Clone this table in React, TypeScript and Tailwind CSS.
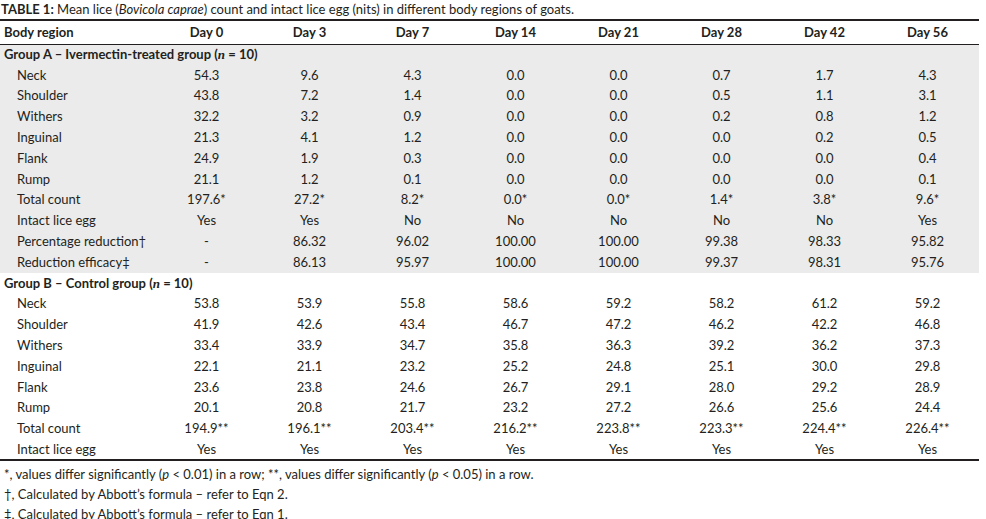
import React from "react";

type Row = { label: string; values: string[] };

const groupA: Row[] = [
  { label: "Neck", values: ["54.3", "9.6", "4.3", "0.0", "0.0", "0.7", "1.7", "4.3"] },
  { label: "Shoulder", values: ["43.8", "7.2", "1.4", "0.0", "0.0", "0.5", "1.1", "3.1"] },
  { label: "Withers", values: ["32.2", "3.2", "0.9", "0.0", "0.0", "0.2", "0.8", "1.2"] },
  { label: "Inguinal", values: ["21.3", "4.1", "1.2", "0.0", "0.0", "0.0", "0.2", "0.5"] },
  { label: "Flank", values: ["24.9", "1.9", "0.3", "0.0", "0.0", "0.0", "0.0", "0.4"] },
  { label: "Rump", values: ["21.1", "1.2", "0.1", "0.0", "0.0", "0.0", "0.0", "0.1"] },
  { label: "Total count", values: ["197.6*", "27.2*", "8.2*", "0.0*", "0.0*", "1.4*", "3.8*", "9.6*"] },
  { label: "Intact lice egg", values: ["Yes", "Yes", "No", "No", "No", "No", "No", "Yes"] },
  { label: "Percentage reduction\u2020", values: ["-", "86.32", "96.02", "100.00", "100.00", "99.38", "98.33", "95.82"] },
  { label: "Reduction efficacy\u2021", values: ["-", "86.13", "95.97", "100.00", "100.00", "99.37", "98.31", "95.76"] },
];

const groupB: Row[] = [
  { label: "Neck", values: ["53.8", "53.9", "55.8", "58.6", "59.2", "58.2", "61.2", "59.2"] },
  { label: "Shoulder", values: ["41.9", "42.6", "43.4", "46.7", "47.2", "46.2", "42.2", "46.8"] },
  { label: "Withers", values: ["33.4", "33.9", "34.7", "35.8", "36.3", "39.2", "36.2", "37.3"] },
  { label: "Inguinal", values: ["22.1", "21.1", "23.2", "25.2", "24.8", "25.1", "30.0", "29.8"] },
  { label: "Flank", values: ["23.6", "23.8", "24.6", "26.7", "29.1", "28.0", "29.2", "28.9"] },
  { label: "Rump", values: ["20.1", "20.8", "21.7", "23.2", "27.2", "26.6", "25.6", "24.4"] },
  { label: "Total count", values: ["194.9**", "196.1**", "203.4**", "216.2**", "223.8**", "223.3**", "224.4**", "226.4**"] },
  { label: "Intact lice egg", values: ["Yes", "Yes", "Yes", "Yes", "Yes", "Yes", "Yes", "Yes"] },
];

const days = ["Day 0", "Day 3", "Day 7", "Day 14", "Day 21", "Day 28", "Day 42", "Day 56"];

function DataRow({ row }: { row: Row }) {
  return (
    <tr className="h-[20.8px]">
      <td className="pl-[17px] p-0 whitespace-nowrap">{row.label}</td>
      {row.values.map((v, i) => (
        <td key={i} className="p-0 text-center whitespace-nowrap">
          {v}
        </td>
      ))}
    </tr>
  );
}

export default function App() {
  return (
    <div
      className="w-[986px] h-[519px] bg-white text-[#231f20] text-[13px] leading-none overflow-hidden"
      style={{ fontFamily: "Lato, 'Open Sans', sans-serif" }}
    >
      <div className="h-[19px] pl-[1px] pt-[3px] whitespace-nowrap">
        <span className="font-bold">TABLE 1:</span> Mean lice (<i>Bovicola caprae</i>) count and intact lice egg (nits) in different body regions of goats.
      </div>
      <table className="w-[979px] table-fixed border-collapse">
        <colgroup>
          <col className="w-[155px]" />
          {days.map((d) => (
            <col key={d} className="w-[103px]" />
          ))}
        </colgroup>
        <thead>
          <tr className="h-[24px] border-t-2 border-b border-[#231f20] font-bold">
            <th className="p-0 pl-[4px] pt-[1px] text-left">Body region</th>
            {days.map((d) => (
              <th key={d} className="p-0 pt-[1px] text-center">
                {d}
              </th>
            ))}
          </tr>
        </thead>
        <tbody className="bg-[#ebebeb]">
          <tr className="h-[20.8px]">
            <td colSpan={9} className="p-0 pl-[4px] font-bold whitespace-nowrap">
              Group A – Ivermectin-treated group (<i className="font-bold" style={{ fontFamily: "'Liberation Serif', serif" }}>n</i> = 10)
            </td>
          </tr>
          {groupA.map((r) => (
            <DataRow key={r.label} row={r} />
          ))}
        </tbody>
        <tbody className="border-b-2 border-[#231f20]">
          <tr className="h-[20.8px]">
            <td colSpan={9} className="p-0 pl-[4px] font-bold whitespace-nowrap">
              Group B – Control group (<i className="font-bold" style={{ fontFamily: "'Liberation Serif', serif" }}>n</i> = 10)
            </td>
          </tr>
          {groupB.map((r) => (
            <DataRow key={r.label} row={r} />
          ))}
        </tbody>
      </table>
      <div className="pl-[4px] pt-[3px] leading-[20px] whitespace-nowrap">
        <div>
          *, values differ significantly (<i>p</i> &lt; 0.01) in a row; **, values differ significantly (<i>p</i> &lt; 0.05) in a row.
        </div>
        <div>†, Calculated by Abbott’s formula – refer to Eqn 2.</div>
        <div>‡, Calculated by Abbott’s formula – refer to Eqn 1.</div>
      </div>
    </div>
  );
}
